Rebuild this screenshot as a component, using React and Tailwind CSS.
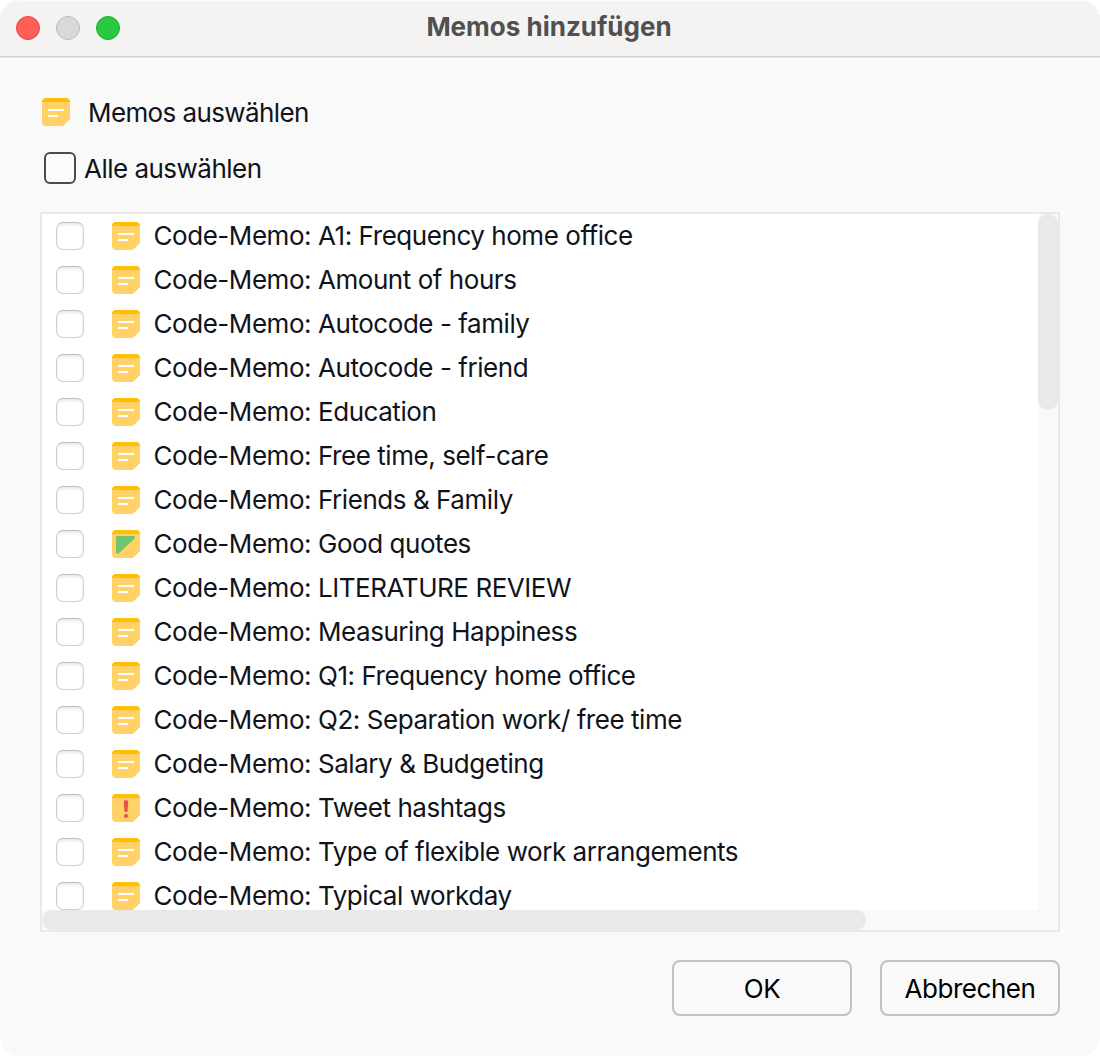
import React from 'react';

const memos = [
  { id: 1, title: 'Code-Memo: A1: Frequency home office' },
  { id: 2, title: 'Code-Memo: Amount of hours' },
  { id: 3, title: 'Code-Memo: Autocode - family' },
  { id: 4, title: 'Code-Memo: Autocode - friend' },
  { id: 5, title: 'Code-Memo: Education' },
  { id: 6, title: 'Code-Memo: Free time, self-care' },
  { id: 7, title: 'Code-Memo: Friends & Family' },
  { id: 8, title: 'Code-Memo: Good quotes', icon: 'green' },
  { id: 9, title: 'Code-Memo: LITERATURE REVIEW' },
  { id: 10, title: 'Code-Memo: Measuring Happiness' },
  { id: 11, title: 'Code-Memo: Q1: Frequency home office' },
  { id: 12, title: 'Code-Memo: Q2: Separation work/ free time' },
  { id: 13, title: 'Code-Memo: Salary & Budgeting' },
  { id: 14, title: 'Code-Memo: Tweet hashtags', icon: 'alert' },
  { id: 15, title: 'Code-Memo: Type of flexible work arrangements' },
  { id: 16, title: 'Code-Memo: Typical workday' },
];

function MemoIcon({ type = 'note' }) {
  return (
    <svg className="h-7 w-7 shrink-0" viewBox="0 0 28 28" fill="none">
      <path d="M0 4H28V20Q28 21 27 22L22 27Q21 28 20 28H4Q0 28 0 24Z" fill="#ffd166" />
      <path d="M0 4Q0 0 4 0H24Q28 0 28 4Z" fill="#ffbf00" />
      {type === 'note' && <path d="M6 11H22V13H6ZM6 17H16V19H6Z" fill="#fff" />}
      {type === 'green' && (
        <path d="M5.5 6H21.5C23.2 6 23.6 7.7 22.4 8.8L6.8 23.2C5.6 24.2 4 23.6 4 22V7.5C4 6.6 4.6 6 5.5 6Z" fill="#6fc56d" />
      )}
      {type === 'alert' && (
        <g fill="#e8504f">
          <path d="M11.8 8C11.8 6.7 12.7 6 14 6S16.2 6.7 16.2 8L15.6 16.8C15.5 17.6 14.8 18 14 18S12.5 17.6 12.4 16.8Z" />
          <circle cx="14" cy="22" r="2.1" />
        </g>
      )}
    </svg>
  );
}

export default function App() {
  return (
    <div className="h-[1056px] w-[1100px] bg-white font-['Inter',sans-serif] text-[26px] leading-8 text-[#10131a]">
      <div className="flex h-full flex-col overflow-hidden rounded-[20px] bg-[#f9f9f9]">
        <header className="grid h-[57px] shrink-0 grid-cols-[1fr_auto_1fr] items-center border-b border-[#d0d0d0] bg-[#f4f3f2] px-4 shadow-[inset_0_1px_0_#fafafa,0_1px_0_#e9e9e9]">
          <div className="flex gap-4">
            <span className="h-6 w-6 rounded-full border border-[#e2463f] bg-[#ff5f57]" />
            <span className="h-6 w-6 rounded-full border border-[#bababa] bg-[#dad9d8]" />
            <span className="h-6 w-6 rounded-full border border-[#1dad2b] bg-[#28c840]" />
          </div>
          <h1 className="pr-0.5 pb-0.5 font-bold text-[#505050]">Memos hinzufügen</h1>
          <span />
        </header>

        <main className="px-10 pt-[39px]">
          <div className="flex h-8 items-center pl-0.5">
            <MemoIcon />
            <span className="ml-[18px] pt-0.5 tracking-[-0.6px]">Memos auswählen</span>
          </div>
          <label className="mt-6 flex h-8 items-center pl-1">
            <span className="h-8 w-8 rounded-md border-2 border-[#4a4a4a] bg-[#fbfbfb]" />
            <span className="ml-2 pt-0.5 tracking-[-0.52px]">Alle auswählen</span>
          </label>

          <div className="mt-7 grid h-[720px] grid-cols-[1fr_20px] grid-rows-[1fr_20px] border-2 border-[#e9e9e9]">
            <ul className="h-[696px] overflow-hidden bg-white">
              {memos.map((memo) => (
                <li key={memo.id} className="flex h-11 items-center whitespace-nowrap pl-3.5">
                  <span className="h-7 w-7 shrink-0 rounded-[7px] border border-[#cfcfcf] border-t-[#bdbdbd] bg-white shadow-[inset_0_2px_3px_#e9e9e9]" />
                  <span className="mr-[13.5px] ml-7">
                    <MemoIcon type={memo.icon} />
                  </span>
                  <span className="tracking-[-0.45px]">{memo.title}</span>
                </li>
              ))}
            </ul>
            <div>
              <div className="h-[196px] w-5 rounded-full bg-[#e9e9e9]" />
            </div>
            <div>
              <div className="h-5 w-[824px] rounded-full bg-[#e9e9e9]" />
            </div>
          </div>

          <div className="mt-7 flex justify-end gap-7 tracking-[-0.45px] text-black">
            <button className="h-14 w-[180px] rounded-lg border-2 border-[#c2c2c2] pt-0.5">OK</button>
            <button className="h-14 w-[180px] rounded-lg border-2 border-[#c2c2c2] pt-0.5">Abbrechen</button>
          </div>
        </main>
      </div>
    </div>
  );
}
